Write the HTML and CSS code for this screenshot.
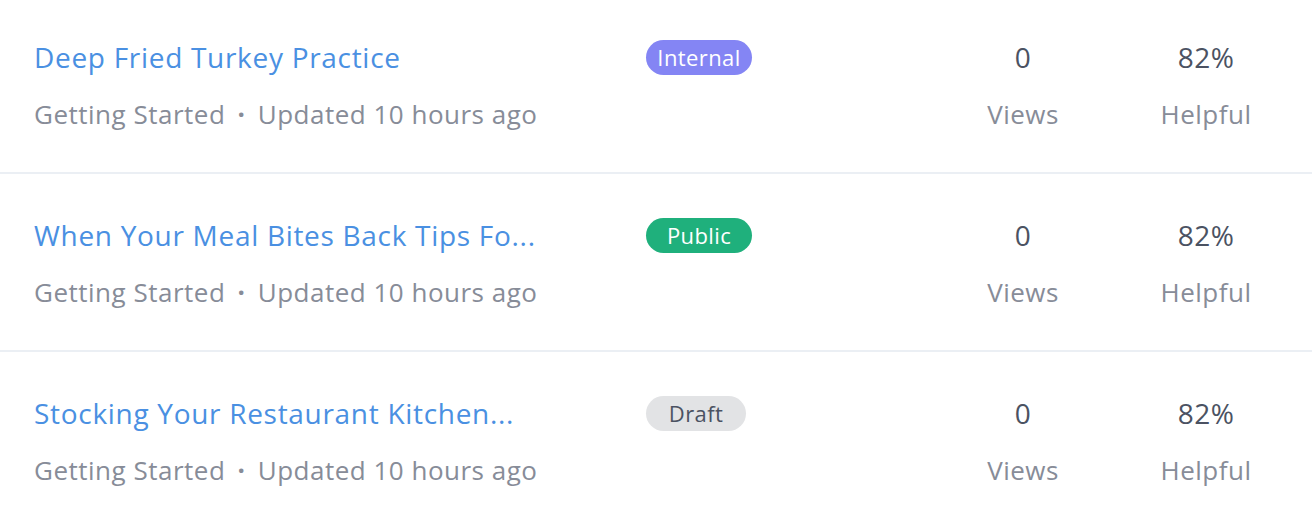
FILE: index.html
```html
<!DOCTYPE html>
<html lang="en">
<head>
    <meta charset="UTF-8">
    <meta name="viewport" content="width=device-width, initial-scale=1.0">
    <title>Articles</title>
    <link rel="stylesheet" href="styles.css">
</head>
<body>
    <ul class="article-list">
        <li class="article">
            <div class="article-info">
                <a href="#" class="article-title">Deep Fried Turkey Practice</a>
                <div class="article-meta">Getting Started <span class="dot">&middot;</span> Updated 10 hours ago</div>
            </div>
            <div class="article-status">
                <span class="badge badge-internal">Internal</span>
            </div>
            <div class="stat">
                <div class="stat-value">0</div>
                <div class="stat-label">Views</div>
            </div>
            <div class="stat">
                <div class="stat-value">82%</div>
                <div class="stat-label">Helpful</div>
            </div>
        </li>
        <li class="article">
            <div class="article-info">
                <a href="#" class="article-title">When Your Meal Bites Back Tips Fo...</a>
                <div class="article-meta">Getting Started <span class="dot">&middot;</span> Updated 10 hours ago</div>
            </div>
            <div class="article-status">
                <span class="badge badge-public">Public</span>
            </div>
            <div class="stat">
                <div class="stat-value">0</div>
                <div class="stat-label">Views</div>
            </div>
            <div class="stat">
                <div class="stat-value">82%</div>
                <div class="stat-label">Helpful</div>
            </div>
        </li>
        <li class="article">
            <div class="article-info">
                <a href="#" class="article-title">Stocking Your Restaurant Kitchen...</a>
                <div class="article-meta">Getting Started <span class="dot">&middot;</span> Updated 10 hours ago</div>
            </div>
            <div class="article-status">
                <span class="badge badge-draft">Draft</span>
            </div>
            <div class="stat">
                <div class="stat-value">0</div>
                <div class="stat-label">Views</div>
            </div>
            <div class="stat">
                <div class="stat-value">82%</div>
                <div class="stat-label">Helpful</div>
            </div>
        </li>
    </ul>
</body>
</html>
```

FILE: styles.css
```css
body {
    margin: 0;
    background: #fff;
    font-family: "Open Sans", Lato, sans-serif;
}
.article-list {
    list-style: none;
    margin: -4px 0 0;
    padding: 0;
}
.article {
    display: flex;
    align-items: flex-start;
    padding: 41px 31px 40px 34px;
    border-bottom: 2px solid #ebeff4;
}
.article-info {
    width: 612px;
    flex-shrink: 0;
}
.article-title {
    display: block;
    max-width: 560px;
    font-size: 28px;
    line-height: 40px;
    letter-spacing: 0.7px;
    color: #4a90e2;
    text-decoration: none;
    white-space: nowrap;
    overflow: hidden;
    text-overflow: ellipsis;
}
.article-meta {
    margin-top: 19px;
    font-size: 26px;
    line-height: 36px;
    letter-spacing: 0.5px;
    color: #878c98;
}
.dot {
    margin: 0 5px;
    font-weight: bold;
}
.article-status {
    width: 302px;
    flex-shrink: 0;
    padding-top: 3px;
}
.badge {
    display: inline-block;
    height: 35px;
    line-height: 35px;
    border-radius: 18px;
    font-size: 22px;
    letter-spacing: 0.4px;
    text-align: center;
}
.badge-internal {
    width: 106px;
    background: #8485f4;
    color: #fff;
}
.badge-public {
    width: 106px;
    background: #1fb07c;
    color: #fff;
}
.badge-draft {
    width: 100px;
    background: #e2e3e5;
    color: #4b5262;
}
.stat {
    width: 150px;
    text-align: center;
}
.stat + .stat {
    margin-left: 33px;
}
.stat-value {
    font-size: 28px;
    line-height: 40px;
    letter-spacing: 0.5px;
    color: #4b5262;
}
.stat-label {
    margin-top: 19px;
    font-size: 26px;
    line-height: 36px;
    letter-spacing: 0.5px;
    color: #878c98;
}
```
